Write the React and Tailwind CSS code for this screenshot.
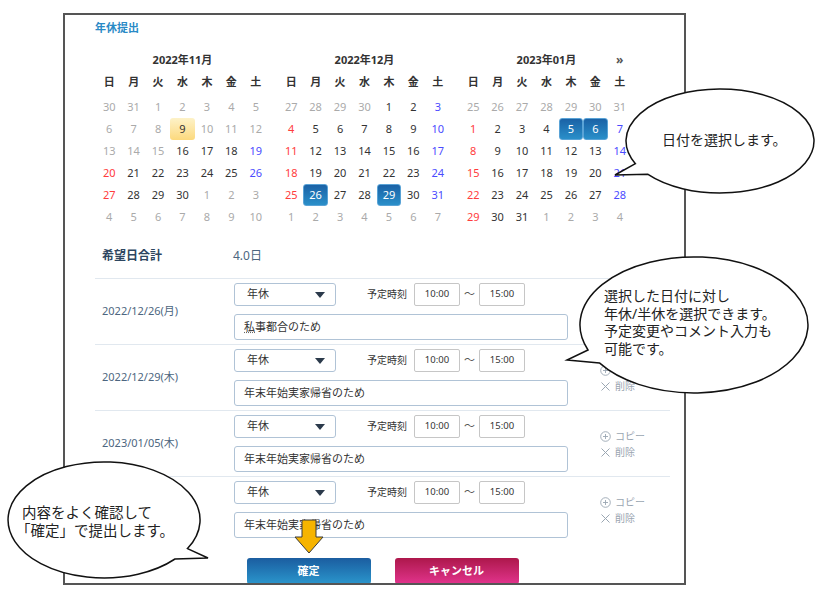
const WEEK = ['日', '月', '火', '水', '木', '金', '土'];

const MONTHS = [
  {
    title: '2022年11月',
    rows: [
      'g30 g31 g1 g2 g3 g4 g5',
      'g6 g7 g8 t9 g10 g11 g12',
      'g13 g14 g15 16 17 18 b19',
      'r20 21 22 23 24 25 b26',
      'r27 28 29 30 g1 g2 g3',
      'g4 g5 g6 g7 g8 g9 g10',
    ],
  },
  {
    title: '2022年12月',
    rows: [
      'g27 g28 g29 g30 1 2 b3',
      'r4 5 6 7 8 9 b10',
      'r11 12 13 14 15 16 b17',
      'r18 19 20 21 22 23 b24',
      'r25 s26 27 28 s29 30 b31',
      'g1 g2 g3 g4 g5 g6 g7',
    ],
  },
  {
    title: '2023年01月',
    next: true,
    rows: [
      'g25 g26 g27 g28 g29 g30 g31',
      'r1 2 3 4 s5 s6 b7',
      'r8 9 10 11 12 13 b14',
      'r15 16 17 18 19 20 b21',
      'r22 23 24 25 26 27 b28',
      'r29 30 31 g1 g2 g3 g4',
    ],
  },
];

const ENTRIES = [
  { date: '2022/12/26(月)', comment: '私事都合のため', spell: true },
  { date: '2022/12/29(木)', comment: '年末年始実家帰省のため' },
  { date: '2023/01/05(木)', comment: '年末年始実家帰省のため' },
  { date: '', comment: '年末年始実家帰省のため' },
];

function Day({ v }) {
  const kind = /^[a-z]/.test(v) ? v[0] : 'n';
  const num = kind === 'n' ? v : v.slice(1);
  const styles = {
    n: 'text-[#333333]',
    g: 'text-[#aaaaaa]',
    r: 'text-[#ff3c3c]',
    b: 'text-[#4b4bff]',
    t: 'text-[#333333] rounded-[3px] bg-linear-to-b from-[#fdf2c8] to-[#fcd97c]',
    s: 'text-white rounded-[3px] border border-[#5aa3d6] bg-linear-to-b from-[#1b62a6] to-[#2a8fc9]',
  };
  return (
    <div className={`flex items-center justify-center text-[11px] ${styles[kind]}`}>{num}</div>
  );
}

function Month({ title, rows, next }) {
  return (
    <div className="w-[171px]">
      <div className="grid h-[22px] grid-cols-7 items-center">
        <div />
        <div className="col-span-5 text-center text-[11px] font-bold text-[#333333]">{title}</div>
        <div className="text-center text-[12px] font-bold text-[#555555]">{next ? '»' : ''}</div>
      </div>
      <div className="grid h-[22px] grid-cols-7 items-center">
        {WEEK.map((w) => (
          <div key={w} className="text-center text-[11px] font-semibold text-[#333333]">
            {w}
          </div>
        ))}
      </div>
      <div className="mt-[3px] grid auto-rows-[22px] grid-cols-7">
        {rows
          .flatMap((r) => r.split(' '))
          .map((v, i) => (
            <Day key={i} v={v} />
          ))}
      </div>
    </div>
  );
}

function PlusCircle() {
  return (
    <svg width="11" height="11" viewBox="0 0 11 11" fill="none" stroke="#9aa6b2" strokeWidth="0.9">
      <circle cx="5.5" cy="5.5" r="4.8" />
      <path d="M5.5 3v5M3 5.5h5" />
    </svg>
  );
}

function Cross() {
  return (
    <svg width="11" height="11" viewBox="0 0 11 11" fill="none" stroke="#9aa6b2" strokeWidth="1">
      <path d="M1.5 1.5l8 8M9.5 1.5l-8 8" />
    </svg>
  );
}

function Entry({ date, comment, spell }) {
  return (
    <div className="flex h-[66px] border-t border-[#e1e8ef]">
      <div className="flex w-[139px] items-center pl-[7px] text-[11px] text-[#4d6680]">{date}</div>
      <div className="w-[334px] pt-[4px]">
        <div className="flex h-[23px] items-center">
          <div className="flex h-[23px] w-[102px] items-center justify-between rounded-[3px] border border-[#b0c3d6] pl-[12px] pr-[10px] text-[11px] text-[#333333]">
            <span>年休</span>
            <svg width="10" height="6" viewBox="0 0 10 6">
              <path d="M0 0h10L5 6z" fill="#2b3a4b" />
            </svg>
          </div>
          <span className="ml-[31px] w-[47px] text-[10px] text-[#333333]">予定時刻</span>
          <div className="flex h-[23px] w-[46px] items-center justify-center rounded-[2px] border border-[#c6c6c6] text-[9.5px] text-[#333333]">
            10:00
          </div>
          <span className="w-[19px] text-center text-[11px] text-[#555555]">〜</span>
          <div className="flex h-[23px] w-[46px] items-center justify-center rounded-[2px] border border-[#c6c6c6] text-[9.5px] text-[#333333]">
            15:00
          </div>
        </div>
        <div className="mt-[8px] flex h-[26px] items-center rounded-[3px] border border-[#b0c3d6] pl-[9px] text-[11px] text-[#333333]">
          {spell ? (
            <>
              <span className="underline decoration-dotted decoration-[#666]">私</span>
              {comment.slice(1)}
            </>
          ) : (
            comment
          )}
        </div>
      </div>
      <div className="ml-[32px] flex flex-col justify-center gap-[3px] pt-[1px] text-[10px] leading-[13px] text-[#9aa5b1]">
        <div className="flex items-center gap-[4px]">
          <PlusCircle />
          コピー
        </div>
        <div className="flex items-center gap-[4px]">
          <Cross />
          削除
        </div>
      </div>
    </div>
  );
}

function Callouts() {
  return (
    <div className="pointer-events-none absolute inset-0">
      <svg width="825" height="595" className="absolute left-0 top-0">
        <path
          d="M635.4 163.7 L615 175 L647.6 174.2 A94 52 0 1 0 635.4 163.7 Z"
          fill="white"
          stroke="#111"
          strokeWidth="1.5"
        />
        <path
          d="M588 350 L567 360 L599.4 362.9 A114 68 0 1 0 588 350 Z"
          fill="white"
          stroke="#111"
          strokeWidth="1.5"
        />
        <path
          d="M187.5 548.6 L208 558 L175 559 A96 58 0 1 1 187.5 548.6 Z"
          fill="white"
          stroke="#111"
          strokeWidth="1.5"
        />
        <path
          d="M302 520 H316 V537 H323 L309 553 L295 537 H302 Z"
          fill="#f6b400"
          stroke="#3a3a3a"
          strokeWidth="1"
        />
      </svg>
      <div className="absolute left-[662px] top-[131px] text-[14px] leading-[18px] text-[#222222]">
        日付を選択します。
      </div>
      <div className="absolute left-[604px] top-[287px] text-[14px] leading-[17.5px] text-[#222222]">
        <div>選択した日付に対し</div>
        <div>年休/半休を選択できます。</div>
        <div>予定変更やコメント入力も</div>
        <div>可能です。</div>
      </div>
      <div className="absolute left-[22px] top-[503px] text-[14.5px] leading-[18px] text-[#222222]">
        <div>内容をよく確認して</div>
        <div className="-ml-[6px]">「確定」で提出します。</div>
      </div>
    </div>
  );
}

export default function App() {
  return (
    <div className="relative h-[595px] w-[825px] overflow-hidden bg-white font-['Noto_Sans','Noto_Sans_CJK_JP',sans-serif]">
      <div className="ml-[63px] mt-[13px] h-[572px] w-[623px] overflow-hidden border-2 border-[#555555] pl-[30px]">
        <div className="pt-[6px] text-[11px] font-bold leading-[14px] text-[#2a8ac6]">年休提出</div>

        <div className="ml-[2px] mt-[14px] flex gap-[11px]">
          {MONTHS.map((m) => (
            <Month key={m.title} {...m} />
          ))}
        </div>

        <div className="w-[575px]">
          <div className="mb-[12px] mt-[18px] flex h-[20px] items-center">
            <div className="w-[138px] pl-[7px] text-[12px] font-bold text-[#2d4660]">希望日合計</div>
            <div className="text-[12px] text-[#4d6680]">4.0日</div>
          </div>

          {ENTRIES.map((e, i) => (
            <Entry key={i} {...e} />
          ))}

          <div className="mt-[16px] flex justify-center gap-[24px]">
            <button className="h-[26px] w-[124px] rounded-[3px] bg-linear-to-b from-[#1b5da0] to-[#2b96cc] text-[11px] font-bold text-white">
              確定
            </button>
            <button className="h-[26px] w-[124px] rounded-[3px] bg-linear-to-b from-[#ad174b] to-[#e2338d] text-[11px] font-bold text-white">
              キャンセル
            </button>
          </div>
        </div>
      </div>
      <Callouts />
    </div>
  );
}
